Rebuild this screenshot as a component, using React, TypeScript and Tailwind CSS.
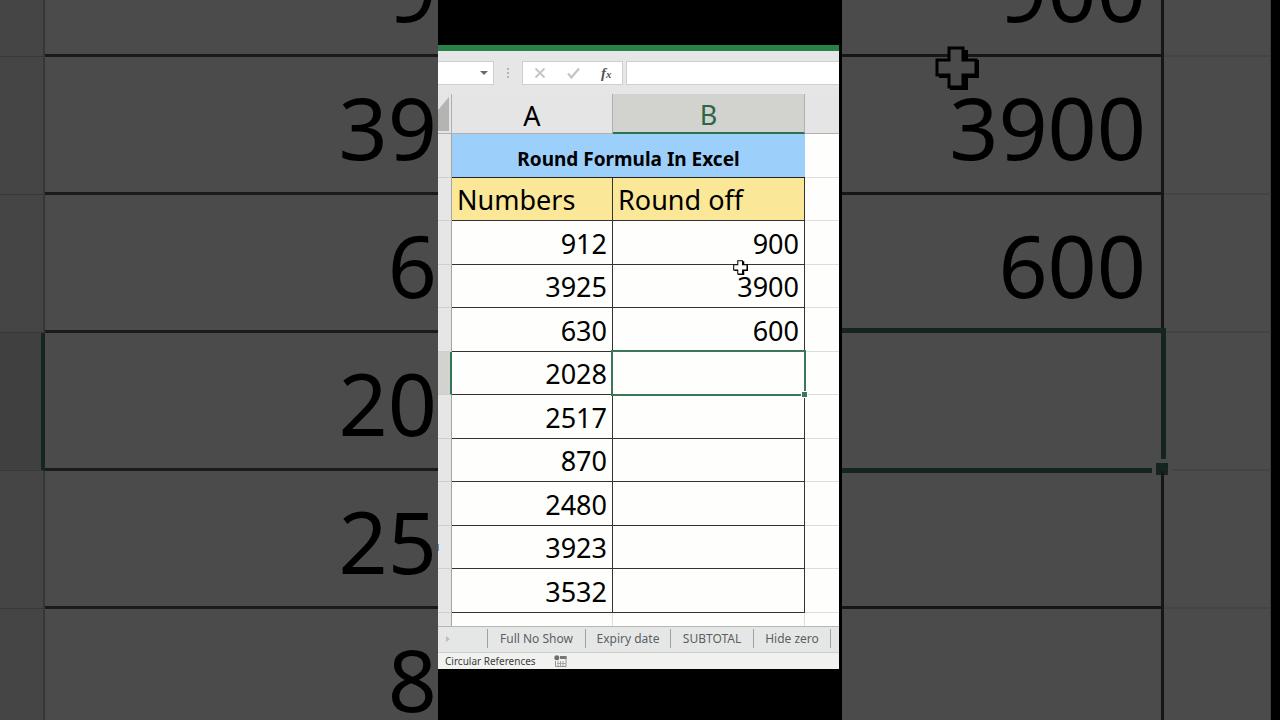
import type { ReactNode } from "react";

type RowData = { a: string; b: string; selected?: boolean; cursor?: boolean };

const rows: RowData[] = [
  { a: "912", b: "900", cursor: true },
  { a: "3925", b: "3900" },
  { a: "630", b: "600" },
  { a: "2028", b: "", selected: true },
  { a: "2517", b: "" },
  { a: "870", b: "" },
  { a: "2480", b: "" },
  { a: "3923", b: "" },
  { a: "3532", b: "" },
];

const tabs = [
  { label: "Full No Show", width: "w-[98px]" },
  { label: "Expiry date", width: "w-[85px]" },
  { label: "SUBTOTAL", width: "w-[83px]" },
  { label: "Hide zero", width: "w-[77px]" },
];

const leftBackdrop = ["9", "39", "6", "20", "25", "8"];
const rightBackdrop = ["900", "3900", "600", "", "", ""];

function PlusCursor({ className, fill }: { className: string; fill: string }) {
  return (
    <svg className={className} viewBox="0 0 44 44" aria-hidden="true">
      <path d="M15 4h18v10h11v18H33v12H15V32H4V14h11z" fill="#000" />
      <path d="M14 2h14v12h13v15H28v12H14V29H2V14h12z" fill={fill} stroke="#000" strokeWidth="3" />
    </svg>
  );
}

function BigCell({ children, short }: { children: ReactNode; short: boolean }) {
  return (
    <div className={`flex items-end justify-end overflow-hidden ${short ? "h-[54px]" : "h-[135px]"}`}>
      <span className="h-[135px] leading-[140px]">{children}</span>
    </div>
  );
}

function LeftBackdrop() {
  return (
    <div className="min-w-0 flex-1 overflow-hidden bg-[#4b4b4b]" aria-hidden="true">
      <table className="w-full table-fixed border-separate border-spacing-0 text-[86px] text-black">
        <tbody>
          {leftBackdrop.map((text, i) => (
            <tr key={i}>
              <td
                className={
                  i === 3
                    ? "w-[45px] border-r-4 border-b border-r-[#14261d] border-b-[#383838] bg-[#404040] p-0"
                    : "w-[45px] border-r-2 border-b border-r-[#363636] border-b-[#383838] bg-[#454545] p-0"
                }
              />
              <td className="border-b-3 border-[#1a1a1a] p-0 pr-[1px]">
                <BigCell short={i === 0}>{text}</BigCell>
              </td>
            </tr>
          ))}
        </tbody>
      </table>
    </div>
  );
}

function RightBackdrop() {
  return (
    <div className="flex min-w-0 flex-1 overflow-hidden bg-[#4b4b4b]" aria-hidden="true">
      <table className="w-full table-fixed border-separate border-spacing-0 self-start text-[86px] text-black">
        <tbody>
          {rightBackdrop.map((text, i) => (
            <tr key={i}>
              <td className="relative border-r-3 border-b-3 border-[#161616] p-0 pr-[15px]">
                <BigCell short={i === 0}>{text}</BigCell>
                {i === 1 && <PlusCursor className="absolute -top-[11px] right-[182px] size-[44px]" fill="#4b4b4b" />}
                {i === 3 && (
                  <>
                    <div className="absolute -inset-x-[5px] -top-[5px] -bottom-[5px] border-5 border-[#16241f]" />
                    <div className="absolute -right-[11px] -bottom-[11px] size-[20px] border-4 border-[#4b4b4b] bg-[#16241f]" />
                  </>
                )}
              </td>
              <td className="w-[107px] border-r border-b-2 border-r-[#3c3c3c] border-b-[#444444] p-0" />
            </tr>
          ))}
        </tbody>
      </table>
      <div className="w-[9px] shrink-0 bg-black" />
    </div>
  );
}

function FormulaBar() {
  return (
    <div className="flex h-[43px] items-start bg-[#e6e6e6] pt-[10px]">
      <div className="flex h-[24px] w-[56px] items-center border border-l-0 border-[#cfcfcf] bg-white">
        <input aria-label="Name box" className="h-full w-[42px] min-w-0 outline-none" />
        <button aria-label="Open name list" className="flex h-full flex-1 items-center">
          <svg className="h-[4px] w-[8px]" viewBox="0 0 8 4">
            <path d="M0 0h8L4 4z" fill="#6a6a6a" />
          </svg>
        </button>
      </div>
      <svg className="mx-[10px] h-[24px] w-[8px]" viewBox="0 0 8 24" fill="#b4b4b4" aria-hidden="true">
        <path d="M3 7h2v2H3zM3 11h2v2H3zM3 15h2v2H3z" />
      </svg>
      <div className="flex h-[24px] w-[101px] items-center justify-around border border-[#cfcfcf] bg-white">
        <button aria-label="Cancel">
          <svg className="size-[12px]" viewBox="0 0 12 12" fill="none" stroke="#c4c4c4" strokeWidth="1.8">
            <path d="M1.500 1.500l9 9M10.500 1.500l-9 9" />
          </svg>
        </button>
        <button aria-label="Enter">
          <svg className="h-[12px] w-[13px]" viewBox="0 0 13 12" fill="none" stroke="#c4c4c4" strokeWidth="2.2">
            <path d="M1 6.5l3.500 4L12 1.500" />
          </svg>
        </button>
        <button
          aria-label="Insert function"
          className="font-['Liberation_Serif',serif] text-[15px] leading-[20px] font-bold text-[#555] italic"
        >
          f<span className="text-[11px]">x</span>
        </button>
      </div>
      <input
        aria-label="Formula"
        className="ml-[3px] h-[24px] min-w-0 flex-1 border border-r-0 border-[#cfcfcf] bg-white px-1 outline-none"
      />
    </div>
  );
}

function Sheet() {
  return (
    <table className="w-full table-fixed border-separate border-spacing-0 bg-[#fefefc] text-[27px] text-black">
      <colgroup>
        <col className="w-[14px]" />
        <col className="w-[161px]" />
        <col className="w-[192px]" />
        <col />
      </colgroup>
      <thead>
        <tr className="h-[40px] bg-[#e5e5e5] leading-[34px]">
          <th className="border-r border-b border-[#b0b0b0] p-0">
            <svg className="h-[34px] w-[11px]" viewBox="0 0 11 34" aria-hidden="true">
              <path d="M11 0v34H0V13z" fill="#b4b5b3" />
            </svg>
          </th>
          <th className="border-r border-b border-[#b0b0b0] p-0 pt-[4px] font-normal">A</th>
          <th className="border-r border-b-2 border-r-[#b0b0b0] border-b-[#2b7250] bg-[#d2d3cf] p-0 pt-[4px] font-normal text-[#2f6548]">
            B
          </th>
          <th className="border-b border-[#b0b0b0] p-0" />
        </tr>
      </thead>
      <tbody>
        <tr className="h-[44px]">
          <td className="border-r border-b border-r-[#a5a5a5] border-b-[#cfcfcf] bg-[#e6e6e6] p-0" />
          <th
            colSpan={2}
            className="border-b border-[#222] bg-[#9ccffa] p-0 pt-[8px] text-[19px] leading-[35px] font-bold"
          >
            Round Formula In Excel
          </th>
          <td className="border-b border-[#dcdedb] p-0" />
        </tr>
        <tr className="h-[43px] bg-[#fae798] text-left leading-[40px]">
          <td className="border-r border-b border-r-[#a5a5a5] border-b-[#cfcfcf] bg-[#e6e6e6] p-0" />
          <th className="border-r border-b border-[#333] p-0 pt-[2px] pl-[5px] font-normal">Numbers</th>
          <th className="border-r border-b border-[#333] p-0 pt-[2px] pl-[5px] font-normal">Round off</th>
          <td className="border-b border-[#dcdedb] bg-[#fefefc] p-0" />
        </tr>
        {rows.map((row) => (
          <tr key={row.a} className="h-[44px] text-right leading-[40px] even:h-[43px]">
            <td
              className={
                row.selected
                  ? "border-r-2 border-b border-r-[#2f7553] border-b-[#cfcfcf] bg-[#d2d3cf] p-0"
                  : "border-r border-b border-r-[#a5a5a5] border-b-[#cfcfcf] bg-[#e6e6e6] p-0"
              }
            />
            <td className="border-r border-b border-[#333] p-0 pt-[2px] pr-[5px]">{row.a}</td>
            <td className="relative border-r border-b border-[#333] p-0 pt-[2px] pr-[5px]">
              {row.b}
              {row.cursor && (
                <PlusCursor className="absolute top-[39px] left-[120px] z-10 size-[15px]" fill="#fefefc" />
              )}
              {row.selected && (
                <>
                  <div className="absolute -inset-[2px] z-10 border-2 border-[#3a7758]" />
                  <div className="absolute -right-[4px] -bottom-[4px] z-10 size-[7px] border border-[#fefefc] bg-[#3a7758]" />
                </>
              )}
            </td>
            <td className="border-b border-[#dcdedb] p-0" />
          </tr>
        ))}
        <tr className="h-[13px]">
          <td className="border-r border-[#a5a5a5] bg-[#e6e6e6] p-0" />
          <td className="border-r border-[#dcdedb] p-0" />
          <td className="border-r border-[#dcdedb] p-0" />
          <td className="p-0" />
        </tr>
      </tbody>
    </table>
  );
}

function SheetTabs() {
  return (
    <nav
      aria-label="Sheets"
      className="flex h-[26px] items-start border-t border-[#b4b6b6] bg-[#e5e7e7] pt-[2px] text-[12px] text-[#5c5e5e]"
    >
      <button aria-label="Scroll sheets" className="flex h-[19px] w-[50px] items-center border-r border-[#a0a2a2] pl-[8px]">
        <svg className="h-[6px] w-[4px]" viewBox="0 0 4 6">
          <path d="M0 0l4 3-4 3z" fill="#bcbebe" />
        </svg>
      </button>
      {tabs.map((tab) => (
        <button
          key={tab.label}
          className={`h-[19px] border-r border-[#a0a2a2] leading-[18px] whitespace-nowrap ${tab.width}`}
        >
          {tab.label}
        </button>
      ))}
    </nav>
  );
}

function StatusBar() {
  return (
    <footer className="flex h-[17px] items-center gap-[18px] border-t border-[#cdcecd] bg-[#f1f1ef] pl-[7px] text-[10px] leading-[16px] text-[#3c3c3c]">
      <span>Circular References</span>
      <button aria-label="Record macro">
        <svg className="h-[12px] w-[13px]" viewBox="0 0 13 12" fill="none">
          <path d="M6 1.500h6v10H1.500V6" stroke="#959595" />
          <path d="M6 1h6.500v3H6z" fill="#777" />
          <path d="M4 6v5M6.500 6v5M9 6v5M3 8.500h9" stroke="#a8a8a8" />
          <circle cx="2.800" cy="2.800" r="2.500" fill="#6e6e6e" />
        </svg>
      </button>
    </footer>
  );
}

export default function App() {
  return (
    <div className="flex h-screen overflow-hidden bg-black font-['Noto_Sans',sans-serif]">
      <LeftBackdrop />
      <main className="w-[404px] shrink-0 bg-black pt-[45px] pr-[3px]">
        <div className="relative bg-white">
          <div className="h-[6px] bg-[#2a8049]" />
          <FormulaBar />
          <Sheet />
          <SheetTabs />
          <StatusBar />
          <div className="absolute top-[499px] left-0 h-[7px] w-px bg-[#4ba3dc]" />
        </div>
      </main>
      <RightBackdrop />
    </div>
  );
}
